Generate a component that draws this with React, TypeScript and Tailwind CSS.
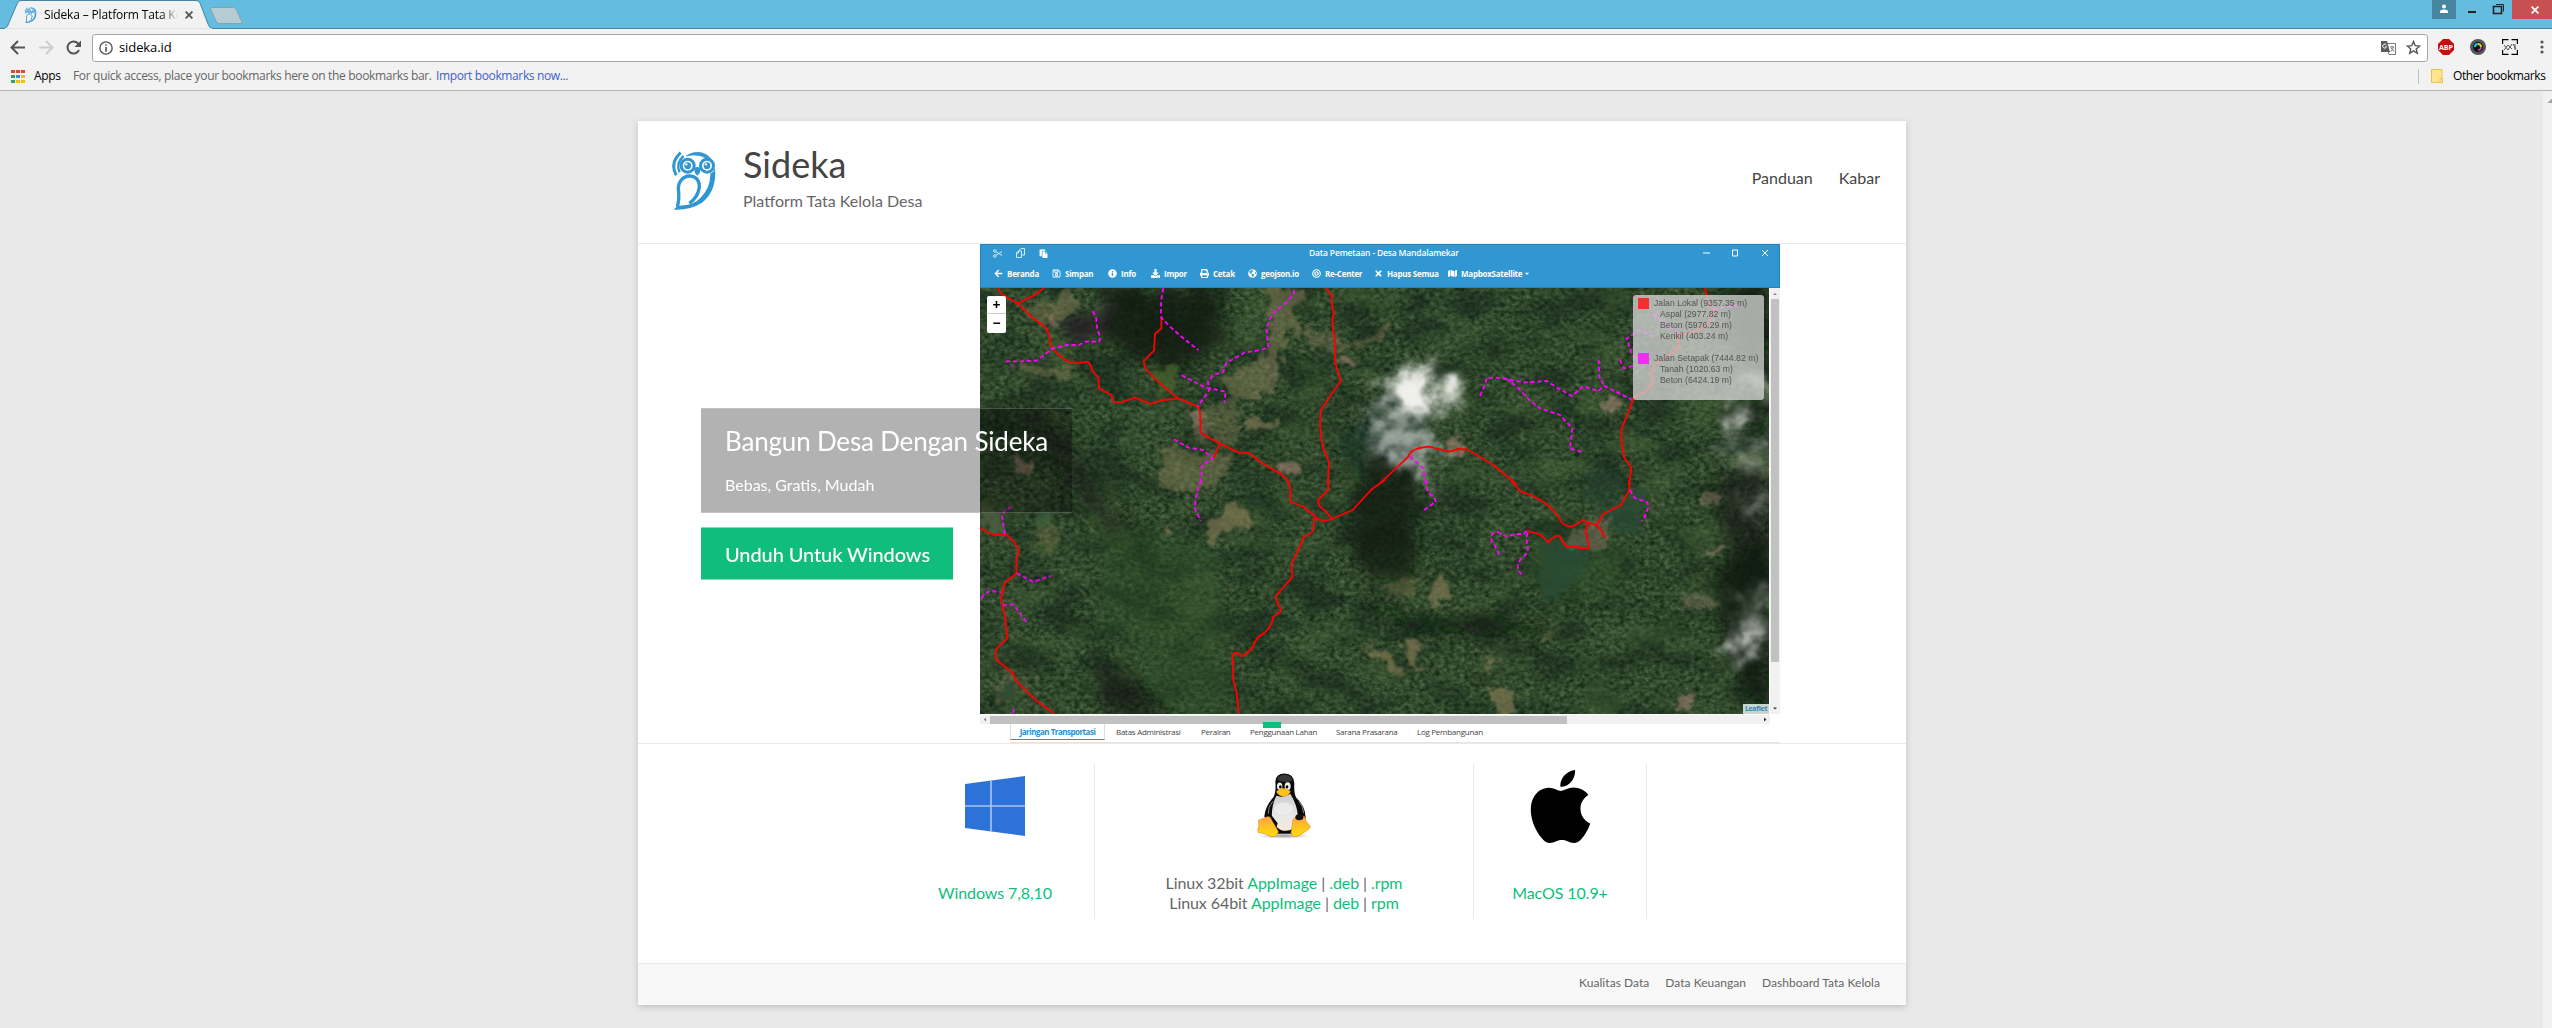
import React from "react";
import {
  FaArrowLeft, FaRegSave, FaInfoCircle, FaDownload, FaPrint, FaGlobeAmericas, FaBullseye,
  FaTimes, FaMap, FaRegCopy, FaPaste, FaCaretDown,
} from "react-icons/fa";
import { SiApple } from "react-icons/si";

const UI = "font-['Open_Sans','Noto_Sans',sans-serif]";

function Owl({ className }: { className: string }) {
  return (
    <svg viewBox="120 120 141 180" className={className} fill="none" stroke="#3096d3">
      <path d="M152 128Q118 160 139 196" strokeWidth="9" />
      <path d="M161 138Q136 160 149 187" strokeWidth="7" />
      <path d="M168 138Q196 120 223 131Q242 139 249 160Q215 126 168 138Z" fill="#3096d3" strokeWidth="2" />
      <circle cx="173" cy="167" r="19.500" strokeWidth="9" />
      <circle cx="231" cy="167" r="19.500" strokeWidth="9" />
      <circle cx="173" cy="167" r="10" fill="#3096d3" stroke="none" />
      <circle cx="231" cy="167" r="10" fill="#3096d3" stroke="none" />
      <circle cx="169" cy="163" r="3.500" fill="#fff" stroke="none" />
      <circle cx="228" cy="163" r="3.500" fill="#fff" stroke="none" />
      <path d="M193 174Q202 168 211 174Q212 190 202 197Q192 190 193 174Z" fill="#3096d3" stroke="none" />
      <path d="M142 290Q149 268 145 236C146 188 210 184 208 232Q204 262 178 280" strokeWidth="10" />
      <path d="M241 190Q256 186 254 166Q264 240 216 278Q180 301 131 299Q138 292 142 287Q190 289 213 262Q242 232 241 190Z" fill="#3096d3" stroke="none" />
    </svg>
  );
}

function BrowserTabs() {
  return (
    <div className={`relative flex h-[29px] border-b border-[#4585a2] bg-[#64bddf] ${UI}`}>
      <svg className="absolute left-0 top-0 h-[29px] w-[250px]" viewBox="0 0 250 29">
        <path d="M0 28.500H4Q7 28 8 25L17 4Q18 .5 21 .5H196Q199 .5 200 3L208 24Q209.500 28.500 213 28.500H250" fill="#f2f2f2" stroke="#4585a2" />
        <path d="M5 29H212" stroke="#f2f2f2" strokeWidth="1.500" />
        <path d="M212 7.500H233Q235 7.500 236 9L242 22Q242.500 23.500 241 23.500H219Q217 23.500 216 21L210.500 9Q210 7.500 212 7.500Z" fill="#b7cbd3" stroke="#7fa5b5" />
      </svg>
      <div className="relative flex h-[29px] items-center pl-[24px]">
        <Owl className="h-4 w-[13px]" />
        <span className="ml-[7px] w-[134px] whitespace-nowrap bg-gradient-to-r from-black from-85% to-[#f2f2f2] bg-clip-text text-[12px] tracking-[-0.15px] text-transparent">
          Sideka – Platform Tata Ke
        </span>
        <svg className="ml-[7px] h-2 w-2" viewBox="0 0 7 7"><path d="M.5 .5L6.500 6.500M6.500 .5L.5 6.500" stroke="#555" strokeWidth="1.600" /></svg>
      </div>
      <div className="relative ml-auto flex h-[19px]">
        <div className="flex w-6 items-center justify-center bg-[#46849f]">
          <svg viewBox="0 0 10 10" className="mb-[2px] h-[10px] w-[10px]"><circle cx="5" cy="2.500" r="2" fill="#fff" /><path d="M1 9V7.500Q1 5.500 5 5.500T9 7.500V9Z" fill="#fff" /></svg>
        </div>
        <svg className="h-[19px] w-14" viewBox="0 0 56 19" fill="none" stroke="#222">
          <path d="M12 12H20" strokeWidth="2" />
          <path d="M37.500 6.500H45.500V13.500H37.500Z" strokeWidth="1.600" /><path d="M40 4.500H47.500V11.500" />
        </svg>
        <div className="flex w-10 items-center bg-[#c75050] pl-[19px]">
          <svg viewBox="0 0 8 8" className="h-2 w-2"><path d="M.6 .6L7.400 7.400M7.400 .6L.6 7.400" stroke="#fff" strokeWidth="1.700" /></svg>
        </div>
      </div>
    </div>
  );
}

function AddressRow() {
  return (
    <div className="flex h-9 items-center">
      <svg className="h-9 w-[92px] shrink-0" viewBox="0 0 92 36" fill="none" stroke="#555" strokeWidth="2">
        <path d="M25 18.500H12.500M18 12L11.500 18.500L18 25" />
        <path d="M39 18.500H52M46 12L52.500 18.500L46 25" stroke="#ccc" />
        <path d="M79 21A6 6 0 1 1 78 14.500L80 16.500" /><path d="M81 11.500V18H74.500Z" fill="#555" stroke="none" />
      </svg>
      <div className="mt-[1px] flex h-[28px] flex-1 items-center rounded-[3px] border border-[#a6a6a6] bg-white pl-[6px] pr-[6px]">
        <svg className="h-[14px] w-[14px]" viewBox="0 0 13 13" fill="none" stroke="#555"><circle cx="6.500" cy="6.500" r="5.700" strokeWidth="1.300" /><path d="M6.500 5.500V10M6.500 3V4.500" strokeWidth="1.500" /></svg>
        <span className="ml-[6px] text-[13px] tracking-[-0.1px] text-black">sideka.id</span>
        <svg className="ml-auto h-[14px] w-[15px]" viewBox="0 0 15 14"><path d="M5.500 2.500H14.500V13.500H8Z" fill="#fff" stroke="#777" /><path d="M0 0H6L9 11H0Z" fill="#5c5c5c" /><path d="M5.500 4.200A2 2 0 1 0 5.500 6H4" fill="none" stroke="#fff" /><path d="M9 6H13M11 5V6M12.500 6Q12 9 9.500 10.500M10 7L13 10.500" stroke="#777" fill="none" /></svg>
        <svg className="ml-[10px] h-[15px] w-[15px]" viewBox="0 0 15 15"><path d="M7.500 1.500L9.200 5.700L13.700 6L10.200 8.900L11.300 13.300L7.500 10.900L3.700 13.300L4.800 8.900L1.300 6L5.800 5.700Z" fill="none" stroke="#555" strokeWidth="1.400" /></svg>
      </div>
      <div className="flex w-[124px] shrink-0 items-center">
        <svg className="ml-[10px] h-4 w-4" viewBox="0 0 16 16"><path d="M5 0H11L16 5V11L11 16H5L0 11V5Z" fill="#c70d0d" /><text x="8" y="10.600" textAnchor="middle" fontSize="7" fontWeight="bold" fill="#fff" fontFamily="Open Sans" textLength="14" lengthAdjust="spacingAndGlyphs">ABP</text></svg>
        <svg className="ml-[16px] h-4 w-4" viewBox="0 0 16 16"><circle cx="8" cy="8" r="8" fill="#51565c" /><circle cx="8" cy="8" r="5" fill="#111" /><path d="M5 8A3 3 0 0 1 8 5" stroke="#1bd0c0" strokeWidth="2" fill="none" /><path d="M8 5A3 3 0 0 1 11 8" stroke="#d8d020" strokeWidth="2" fill="none" /><path d="M11 8A3 3 0 0 1 8 11" stroke="#e040c0" strokeWidth="1.500" fill="none" /></svg>
        <svg className="ml-[16px] h-4 w-4" viewBox="0 0 16 16" fill="none" stroke="#000"><path d="M.5 5V.5H6.500M9.500 .5H15.500V5M15.500 11V15.500H9.500M6.500 15.500H.5V11" strokeWidth="1.400" /><path d="M2 6L6 11M6 6L2 11M6 6L10 10M10 5L6 11M11 5L14 10M13 5V11" stroke="#555" /></svg>
        <svg className="ml-[22px] h-[14px] w-[4px]" viewBox="0 0 4 14" fill="#555"><circle cx="2" cy="2" r="1.600" /><circle cx="2" cy="7" r="1.600" /><circle cx="2" cy="12" r="1.600" /></svg>
      </div>
    </div>
  );
}

const appDots = ["#ea4335", "#ea4335", "#ea4335", "#34a05a", "#3b88f0", "#fbbc05", "#34a05a", "#fbbc05", "#fbbc05"];

function BookmarksBar() {
  return (
    <div className="flex h-[26px] items-center border-b border-[#b3b3b3] pb-[3px] pl-[11px] text-[12px] leading-none">
      <div className="grid grid-cols-[4px_4px_4px] gap-x-[1px] gap-y-[2px] pt-[1px]">
        {appDots.map((c, i) => <i key={i} className="block h-[3px] w-[4px]" style={{ background: c }} />)}
      </div>
      <span className="ml-[9px] w-[39px] whitespace-nowrap tracking-[-0.3px] text-black">Apps</span>
      <span className="w-[363px] whitespace-nowrap tracking-[-0.33px] text-[#666]">For quick access, place your bookmarks here on the bookmarks bar.</span>
      <span className="whitespace-nowrap tracking-[-0.37px] text-[#3d5fd0]">Import bookmarks now...</span>
      <div className="ml-auto flex items-center">
        <i className="mr-3 block h-[15px] w-px bg-[#c0c0c0]" />
        <svg className="h-[14px] w-3" viewBox="0 0 12 14"><path d="M.5 .5H11V9.500L11.500 13.500H.5Z" fill="#ffe58f" stroke="#e8c34c" /><path d="M9 9.500H11.500V13.500H9Z" fill="#ffe58f" stroke="#e8c34c" /></svg>
        <span className="ml-[10px] mr-[6px] w-[93px] whitespace-nowrap tracking-[-0.4px] text-black">Other bookmarks</span>
      </div>
    </div>
  );
}

const tools = [
  { icon: FaArrowLeft, label: "Beranda", w: "w-[58px]" },
  { icon: FaRegSave, label: "Simpan", w: "w-[56px]" },
  { icon: FaInfoCircle, label: "Info", w: "w-[43px]" },
  { icon: FaDownload, label: "Impor", w: "w-[49px]" },
  { icon: FaPrint, label: "Cetak", w: "w-[48px]" },
  { icon: FaGlobeAmericas, label: "geojson.io", w: "w-[64px]" },
  { icon: FaBullseye, label: "Re-Center", w: "w-[62px]" },
  { icon: FaTimes, label: "Hapus Semua", w: "w-[74px]" },
  { icon: FaMap, label: "MapboxSatellite", w: "w-[80px]" },
];

function Satellite() {
  return (
    <svg className="block h-[426px] w-[789px]" viewBox="0 0 789 426">
      <defs>
        <filter id="forest" x="0" y="0" width="100%" height="100%" colorInterpolationFilters="sRGB">
          <feTurbulence type="fractalNoise" baseFrequency="0.2 0.26" numOctaves="3" seed="8" />
          <feColorMatrix values=".3 .12 0 0 -.015  .32 .13 0 0 .06  .27 .12 0 0 -.02  0 0 0 0 1" />
        </filter>
        <filter id="relief" x="0" y="0" width="100%" height="100%" colorInterpolationFilters="sRGB">
          <feTurbulence type="fractalNoise" baseFrequency="0.02 0.034" numOctaves="6" seed="21" />
          <feColorMatrix values="0 0 0 0 .06  0 0 0 0 .13  0 0 0 0 .09  3.500 0 0 0 -1.500" />
        </filter>
        <filter id="meadow" x="0" y="0" width="100%" height="100%" colorInterpolationFilters="sRGB">
          <feTurbulence type="fractalNoise" baseFrequency="0.02 0.03" numOctaves="6" seed="35" />
          <feColorMatrix values="0 0 0 0 .32  0 0 0 0 .43  0 0 0 0 .24  0 3 0 0 -1.500" />
        </filter>
        <filter id="ragged" x="-30%" y="-30%" width="160%" height="160%">
          <feTurbulence type="fractalNoise" baseFrequency="0.07" numOctaves="4" seed="4" />
          <feDisplacementMap in="SourceGraphic" scale="24" xChannelSelector="R" yChannelSelector="G" />
          <feGaussianBlur stdDeviation="1" />
        </filter>
        <filter id="haze" x="-30%" y="-30%" width="160%" height="160%">
          <feTurbulence type="fractalNoise" baseFrequency="0.05" numOctaves="4" seed="9" />
          <feDisplacementMap in="SourceGraphic" scale="34" xChannelSelector="R" yChannelSelector="G" />
          <feGaussianBlur stdDeviation="6" />
        </filter>
        <filter id="cloud" x="-30%" y="-30%" width="160%" height="160%" colorInterpolationFilters="sRGB">
          <feTurbulence type="fractalNoise" baseFrequency="0.045" numOctaves="5" seed="12" result="n" />
          <feGaussianBlur in="SourceGraphic" stdDeviation="7" result="b" />
          <feDisplacementMap in="b" in2="n" scale="40" xChannelSelector="R" yChannelSelector="G" result="d" />
          <feColorMatrix in="n" values="0 0 0 0 1  0 0 0 0 1  0 0 0 0 1  0 0 2 0 -.15" result="m" />
          <feComposite in="d" in2="m" operator="in" />
          <feGaussianBlur stdDeviation="1.200" />
        </filter>
      </defs>
      <rect width="789" height="426" fill="#2f452b" />
      <rect width="789" height="426" filter="url(#forest)" />
      <rect width="789" height="426" filter="url(#relief)" opacity=".5" />
      <rect width="789" height="426" filter="url(#meadow)" opacity=".4" />
      <g filter="url(#haze)" fill="#0d1712">
        <path d="M120 0H238L240 55L190 85L130 50Z" opacity=".8" />
        <path d="M85 22H130V55H85Z" fill="#252127" opacity=".85" />
        <path d="M395 165L440 180L435 215L425 300L395 290L360 250L372 220Z" opacity=".75" />
        <path d="M410 100L450 130L430 200L385 190L350 160Z" opacity=".4" />
        <path d="M735 0H789V90L760 70Z" opacity=".85" />
        <path d="M735 130L789 100V145Z" opacity=".7" />
        <path d="M750 270L789 240V426L760 400L738 310Z" opacity=".85" />
        <path d="M735 190L789 175V250L750 265Z" opacity=".6" />
        <path d="M60 110L90 160L125 210L190 290L130 250L80 180L40 140Z" opacity=".5" />
        <path d="M380 310L440 330L520 330L580 345L520 345L430 340Z" opacity=".75" />
        <path d="M115 370L160 400L190 426H130Z" opacity=".6" />
      </g>
      <g filter="url(#haze)" fill="#2f5229" opacity=".4">
        <path d="M115 230L240 260L250 426H190L120 330Z" /><path d="M550 250L640 240L640 310L560 310Z" />
      </g>
      <g filter="url(#ragged)" fill="#857c57" opacity=".65">
        <path d="M285 0H325L315 25L300 60L295 105L262 110L240 90L285 70L290 35Z" opacity=".8" />
        <path d="M310 28L335 45L370 55L405 40L408 48L372 62L335 58L310 40Z" opacity=".6" />
        <path d="M78 5L102 8L98 22L75 35L70 22Z" opacity=".8" /><path d="M45 20L82 10L60 45Z" opacity=".6" />
        <path d="M35 75L80 78L95 88L60 90Z" opacity=".7" />
        <path d="M178 180L210 165L250 168L245 190L215 205L180 200Z" opacity=".7" />
        <path d="M255 105L262 140L250 160L230 150L222 128Z" opacity=".5" />
        <path d="M268 130L298 132L290 142L268 140Z" />
        <path d="M252 212L275 238L242 242L235 262L222 250Z" />
        <path d="M460 282L474 310L450 320Z" /><path d="M388 355L405 360L420 383L412 385Z" />
        <path d="M424 353L443 355L440 372L446 385L425 370Z" /><path d="M510 400L537 405L532 426H516Z" />
        <path d="M503 384L524 360L520 368L505 390Z" /><path d="M560 345L575 340L560 360Z" opacity=".6" />
        <path d="M182 160L205 162L198 188L182 182Z" opacity=".7" /><path d="M190 235L183 250L195 240Z" />
        <path d="M0 215L22 220L22 245L5 245Z" fill="#55664a" /><path d="M60 230L80 235L75 260L55 260Z" opacity=".5" />
        <path d="M10 395L35 380L45 400L20 420Z" opacity=".5" /><path d="M395 300L440 290L430 312Z" opacity=".5" />
      </g>
      <g filter="url(#ragged)" fill="#2b4b35" opacity=".75">
        <path d="M560 255L610 250L605 285L580 315L560 310Z" /><path d="M620 225L665 200L660 245L640 250Z" />
        <path d="M60 215L80 240L55 235Z" fill="#3b5e3a" /><path d="M10 400L38 395L30 412Z" />
        <path d="M170 90L190 75L198 95L180 110Z" fill="#49632f" /><path d="M600 180L640 185L640 240L605 220Z" opacity=".6" />
      </g>
      <g filter="url(#ragged)" fill="#b58b7e" opacity=".5">
        <path d="M205 125L222 120L228 132L210 140Z" /><path d="M210 135L240 135L220 150Z" opacity=".6" />
        <path d="M298 175L322 178L320 188L300 185Z" /><path d="M350 75L375 70L370 80Z" />
        <path d="M462 152L485 148L483 165L466 170Z" /><path d="M625 106L645 115L640 125L625 120Z" />
        <path d="M30 170L50 172L55 185L40 185Z" /><path d="M60 25L78 28L70 38Z" />
        <path d="M600 236L630 230L625 262L590 260Z" opacity=".6" /><path d="M730 258L748 258L745 264L730 264Z" />
        <path d="M720 205L740 208L735 216L718 214Z" opacity=".7" /><path d="M700 310L738 308L742 318L715 320Z" opacity=".5" />
        <path d="M700 408L720 404L712 414L695 418Z" />
      </g>
      <g filter="url(#cloud)" fill="#efefeb">
        <path d="M412 80L452 80L478 92L468 122L430 130L402 116Z" />
        <path d="M385 125L430 130L460 155L445 195L410 178L388 150Z" opacity=".6" />
        <path d="M748 120L764 118L764 146L750 146Z" opacity=".8" /><path d="M735 160L789 150V190L765 180Z" opacity=".4" />
        <path d="M762 84L789 80V106L757 102Z" opacity=".5" />
        <path d="M768 334L784 328L780 350L757 376L746 368Z" opacity=".9" /><path d="M750 205L788 210L782 232Z" opacity=".4" />
        <path d="M750 310L789 295V330L760 335Z" opacity=".3" />
      </g>
      <g fill="none" strokeLinejoin="round" strokeWidth="5.500" stroke="#f00">
        <g transform="translate(-10 -53) scale(.33333)">
          <path d="M85 160Q90 178 105 183L142 205L190 250L222 273Q240 290 240 325Q245 342 270 362Q300 388 320 385L352 380Q362 385 365 405L385 428L387 460L425 480L430 500Q450 505 465 498L495 488L542 507L580 495L626 491L685 515Q692 525 692 590Q697 600 750 625L810 655L835 653L880 687L930 715Q955 735 958 750M142 205L190 182L222 160M574 247L574 280L555 297L552 347L522 377Q520 390 530 405Q560 440 626 491M750 625L730 670M1068 160L1086 182Q1082 200 1092 235Q1082 255 1094 310L1096 385L1112 437L1053 525Q1045 610 1068 660L1077 680L1074 750" />
          <g stroke="#f0f" strokeDasharray="13 8">
            <path d="M108 379H148L200 377L245 342L290 330L327 330L345 320L387 320Q395 310 382 285L378 245L365 225M580 160Q570 200 574 247Q585 260 600 275L640 310L685 345M972 165Q975 180 945 205L908 237Q890 270 890 290L895 335Q885 345 825 352L768 385L760 410L730 420L714 440L718 465L683 515M635 421L705 457L767 470L763 503M612 613L655 638L700 645L728 670L697 690L692 750" />
          </g>
        </g>
        <g transform="translate(400 -53) scale(.33333)">
          <path d="M975 160L985 195L1000 230L985 265Q950 295 895 298L895 342L830 385L812 410L818 440Q805 475 780 475L760 490L748 525L725 580Q722 610 732 665L754 700L747 750M0 745L85 665Q90 640 147 635L208 650L235 642L262 643L340 690L410 748" />
          <g stroke="#f0f" strokeDasharray="13 8">
            <path d="M300 483Q315 450 320 430Q350 425 378 432L435 442L500 438L535 460L575 483L610 454L655 468L672 452L757 495M378 432Q400 445 420 465Q450 500 480 520L540 540L577 580L570 640L608 652M656 375L658 425L672 452M720 375L732 400L760 393M820 305L780 285L740 310L757 360L775 375M1075 210L1000 222M895 295L815 235M90 665L130 700L138 750" />
          </g>
        </g>
        <g transform="translate(-300 102) scale(.33333)">
          <path d="M900 415L940 434H975Q1000 445 1017 482Q1005 510 1010 550L975 577L963 625L975 680L982 745L950 775Q943 800 952 812L1000 850L1006 870L1070 933L1122 970" />
          <g stroke="#f0f" strokeDasharray="13 8">
            <path d="M995 350L975 360L966 378L975 435M1010 550L1060 575L1112 558M903 625Q925 600 935 602L963 607M968 645L1000 643L1040 697M1000 970V955" />
          </g>
        </g>
        <g transform="translate(190 192) scale(.33333)">
          <path d="M352 0L362 30Q358 50 362 66L400 80L434 107L430 150Q425 162 402 170Q390 200 368 245Q362 260 368 290L320 345Q314 360 333 388Q330 400 310 410Q305 430 300 440Q280 465 268 468Q252 485 250 500L225 525L215 528Q195 510 188 525L190 600L200 640L206 700M475 0V28L445 60Q440 75 465 92L485 115M434 110Q460 130 485 117L548 90L605 28L645 0M1022 0L1052 35Q1140 60 1175 128Q1195 145 1212 137L1238 121L1255 129M1072 153L1110 163L1136 187Q1152 165 1167 167L1188 198L1255 205" />
          <g stroke="#f0f" strokeDasharray="13 8">
            <path d="M93 0Q75 50 75 85L92 123M768 0L773 38Q795 50 797 65L760 92M988 224L962 175Q965 155 985 157L1010 170L1035 162H1060L1072 152L1070 190Q1082 215 1055 235Q1030 260 1058 287" />
          </g>
        </g>
        <g transform="translate(580 192) scale(.33333)">
          <path d="M208 0V30L183 75L130 102Q120 120 110 137Q125 150 130 165L137 173M110 137L85 128Q72 145 82 180Q90 195 85 205L18 200L0 170" />
          <path d="M210 30L223 53L262 67Q270 90 245 123" stroke="#f0f" strokeDasharray="13 8" />
        </g>
      </g>
    </svg>
  );
}

const legend = [
  { color: "#f23030", title: "Jalan Lokal (9357.35 m)", rows: ["Aspal (2977.82 m)", "Beton (5976.29 m)", "Kerikil (403.24 m)"] },
  { color: "#ee30ee", title: "Jalan Setapak (7444.82 m)", rows: ["Tanah (1020.63 m)", "Beton (6424.19 m)"] },
];

function MapApp() {
  return (
    <div className={`flex h-[499px] w-[800px] flex-col ${UI}`}>
      <div className="h-11 border border-[#2384bd] bg-[#3097d2] text-white">
        <div className="relative flex h-4 items-center pl-3 text-[9px]">
          <svg className="h-[9px] w-[9px]" viewBox="0 0 9 9" fill="none" stroke="#d5eaf6"><circle cx="1.800" cy="2" r="1.300" /><circle cx="1.800" cy="7" r="1.300" /><path d="M3 2.800L9 6.500M3 6.200L9 2.500" /></svg>
          <svg className="ml-[14px] h-[10px] w-[9px]" viewBox="0 0 9 10" fill="none" stroke="#d5eaf6"><path d="M3.500 3V2L5 .5H8.500V7H5.500M.5 5L2.500 3H5.500V9.500H.5ZM2.500 3V5H.5" /></svg>
          <FaPaste className="ml-[14px]" />
          <span className="absolute left-[328px] whitespace-nowrap text-[8.500px] font-semibold tracking-[-0.16px]">Data Pemetaan - Desa Mandalamekar</span>
          <svg className="ml-auto mr-[10px] h-2 w-[66px]" viewBox="0 0 66 8" fill="none" stroke="#fff"><path d="M0 4H7M29.500 1H34.500V7H29.500ZM59 1L65 7M65 1L59 7" /></svg>
        </div>
        <div className="flex h-[25px] items-center pl-[13px] text-[8px] font-bold">
          {tools.map(({ icon: Icon, label, w }) => (
            <span key={label} className={`flex shrink-0 items-center gap-1 whitespace-nowrap tracking-[-0.25px] ${w}`}>
              <Icon className="h-[9px] w-[9px] shrink-0" />{label}
              {label === "MapboxSatellite" && <FaCaretDown className="-ml-[2px] h-[7px] w-[6px] shrink-0" />}
            </span>
          ))}
        </div>
      </div>
      <div className="flex h-[426px]">
        <div className="relative w-[790px] border-r border-white">
          <Satellite />
          <div className="absolute left-[7px] top-2 flex h-[37px] w-[19px] flex-col rounded-[2px] bg-white text-center text-[14px] font-bold leading-[17px] text-black">
            <span className="h-[18px] border-b border-[#ccc]">+</span><span>−</span>
          </div>
          <div className="absolute left-[653px] top-[7px] h-[105px] w-[131px] rounded-[3px] bg-[#dadada]/75 pl-[5px] pt-[3px] font-['Liberation_Sans',Arial,sans-serif] text-[8.700px] leading-[11px] text-[#555]">
            {legend.map((g) => (
              <div key={g.title} className="mb-[11px]">
                <div className="flex whitespace-nowrap"><i className="mr-[5px] block h-[11px] w-[11px]" style={{ background: g.color }} />{g.title}</div>
                {g.rows.map((r) => <div key={r} className="whitespace-nowrap pl-[22px]">{r}</div>)}
              </div>
            ))}
          </div>
          <div className="absolute bottom-0 right-0 h-[10px] w-[26px] bg-[#cdd3ce] text-center text-[7px] font-bold leading-[10px] tracking-[-0.3px] text-[#2b8cb3]">Leaflet</div>
        </div>
        <div className="flex w-[10px] flex-col items-center bg-[#f1f1f1]">
          <svg className="h-[11px] w-[6px]" viewBox="0 0 6 11"><path d="M1 7L3 5L5 7Z" fill="#888" /></svg>
          <div className="h-[363px] w-2 bg-[#c1c1c1]" />
          <svg className="mt-auto h-[11px] w-[6px]" viewBox="0 0 6 11"><path d="M1 4.500H5L3 6.500Z" fill="#333" /></svg>
        </div>
      </div>
      <div className="mt-px flex h-[9px] w-[790px] items-center bg-[#f1f1f1]">
        <svg className="h-[9px] w-[10px]" viewBox="0 0 10 9"><path d="M6 2.500V6.500L4 4.500Z" fill="#777" /></svg>
        <div className="h-2 w-[577px] bg-[#c1c1c1]" />
        <svg className="ml-auto h-[9px] w-[8px]" viewBox="0 0 8 9"><path d="M2 2.500V6.500L4.500 4.500Z" fill="#333" /></svg>
      </div>
      <div className="ml-[30px] flex h-[19px] border-b border-[#e4e4e4] text-[8px] leading-[16px] tracking-[-0.27px] text-[#444]">
        <span className="h-4 w-[95px] whitespace-nowrap border-x border-b border-x-[#ddd] border-b-[#2a8fcc] text-center text-[8px] font-bold tracking-[-0.5px] text-[#2a8fcc]">Jaringan Transportasi</span>
        <span className="ml-[11px] w-[85px] whitespace-nowrap">Batas Administrasi</span>
        <span className="w-[49px] whitespace-nowrap">Perairan</span>
        <span className="w-[86px] whitespace-nowrap">Penggunaan Lahan</span>
        <span className="w-[81px] whitespace-nowrap">Sarana Prasarana</span>
        <span className="whitespace-nowrap">Log Pembangunan</span>
      </div>
    </div>
  );
}

function Tux() {
  return (
    <svg viewBox="0 0 162 200" className="h-[67px] w-[54px]">
      <defs>
        <linearGradient id="foot" x2="0" y2="1"><stop stopColor="#ffa049" /><stop offset="1" stopColor="#ffe000" /></linearGradient>
        <linearGradient id="belly" x2="0" y2="1"><stop stopColor="#ccc" /><stop offset=".6" stopColor="#e8e8e8" /><stop offset="1" stopColor="#f8e8d8" /></linearGradient>
        <radialGradient id="shade"><stop stopColor="#999" /><stop offset="1" stopColor="#fff" /></radialGradient>
      </defs>
      <ellipse cx="81" cy="188" rx="78" ry="9" fill="url(#shade)" />
      <path d="M55 25Q57 1 83 1Q110 2 112 30Q110 60 118 74Q146 100 146 135L138 150L110 182H58L22 130Q25 98 48 74Q58 60 55 25Z" fill="#0a0a0a" />
      <path d="M60 20Q66 5 84 5Q102 6 107 22Q84 32 60 20Z" fill="#555" opacity=".6" />
      <path d="M58 68Q78 75 100 62Q120 95 122 125L112 165Q80 182 60 162L44 130Q45 92 58 68Z" fill="url(#belly)" />
      <ellipse cx="80" cy="106" rx="29" ry="18" fill="#f3f3f3" opacity=".6" />
      <path d="M34 122Q32 100 48 84M126 84Q138 98 140 120" stroke="#888" strokeWidth="3" fill="none" />
      <ellipse cx="68" cy="39" rx="8" ry="11" fill="#eee" /><ellipse cx="92" cy="39" rx="9" ry="12" fill="#eee" />
      <ellipse cx="70" cy="41" rx="4" ry="5" /><ellipse cx="90" cy="41" rx="4" ry="5" />
      <path d="M58 56Q70 44 79 45Q90 46 101 55Q94 68 80 70Q64 68 58 56Z" fill="#ffc01d" stroke="#d98a00" />
      <path d="M24 134Q38 124 46 142L64 176Q60 192 42 190Q28 180 4 178Q0 168 6 158L4 142Q12 138 24 134Z" fill="url(#foot)" stroke="#e78d20" strokeWidth="2" />
      <path d="M108 140Q120 122 142 130Q146 145 160 160Q156 170 146 174Q128 190 112 190Q98 184 104 170Z" fill="url(#foot)" stroke="#e78d20" strokeWidth="2" />
      <ellipse cx="127" cy="132" rx="12" ry="9" fill="#111" />
      <path d="M40 122L62 150L58 162L44 140Z" fill="#0a0a0a" />
    </svg>
  );
}

const G = ({ children }: { children: React.ReactNode }) => <a className="text-[#0fbe7c]">{children}</a>;

export default function App() {
  return (
    <div className="flex h-[1028px] w-[2552px] flex-col overflow-hidden bg-[#e9e9e9] font-['Lato',sans-serif] text-[#666]">
      <div className={`bg-[#f2f2f2] ${UI}`}>
        <BrowserTabs />
        <AddressRow />
        <BookmarksBar />
      </div>
      <div className="flex flex-1">
        <div className="flex-1">
          <div className="ml-[638px] mt-[30px] flex h-[884px] w-[1268px] flex-col bg-white shadow-[0_2px_6px_rgba(100,100,100,0.3)]">
            <header className="flex h-[123px] shrink-0 border-b border-[#e9e9e9] pl-8 pr-[26px]">
              <Owl className="mt-[29px] h-[60px] w-[47px]" />
              <div className="ml-[26px] mt-[21px]">
                <h1 className="text-[36px] leading-[44px] text-[#444]">Sideka</h1>
                <p className="mt-[5px] text-[16px] leading-[20px]">Platform Tata Kelola Desa</p>
              </div>
              <nav className="ml-auto mt-[47px] flex gap-[26px] text-[16px] leading-5 text-[#444]"><a>Panduan</a><a>Kabar</a></nav>
            </header>
            <section className="relative h-[500px] shrink-0 border-b border-[#e9e9e9] pl-[342px]">
              <MapApp />
              <div className="absolute left-[63px] top-[164px] flex flex-col items-start text-white">
                <div className="h-[105px] w-[371px] border-y border-white/20 bg-black/30 pl-6 pt-4">
                  <h2 className="whitespace-nowrap text-[26px] leading-8 tracking-[-0.18px]">Bangun Desa Dengan Sideka</h2>
                  <p className="mt-[18px] text-[16px] leading-5">Bebas, Gratis, Mudah</p>
                </div>
                <a className="mt-[14px] flex h-[53px] w-[252px] items-center whitespace-nowrap border-y border-[#7fdcb6] bg-[#0fbe7c] pl-6 text-[20px] font-medium tracking-[-0.1px]">Unduh Untuk Windows</a>
              </div>
              <i className="absolute left-[625px] top-[478px] block h-[6px] w-[18px] bg-[#0fbe7c]" />
            </section>
            <section className="ml-[258px] mt-5 flex h-[155px] text-center text-[16px] leading-5 tracking-[-0.08px]">
              <div className="flex w-[199px] flex-col items-center border-r border-[#e9e9e9] pt-3">
                <svg className="h-[60px] w-[60px]" viewBox="0 0 180 180"><path d="M0 24L180 0V180L0 156Z" fill="#2d72d9" /><path d="M78 13V167M0 90H180" stroke="#a9c4ef" strokeWidth="5" /></svg>
                <p className="mt-[47px]"><G>Windows 7,8,10</G></p>
              </div>
              <div className="flex w-[379px] flex-col items-center border-r border-[#e9e9e9] pt-[9px]">
                <Tux />
                <p className="mt-[33px]">Linux 32bit <G>AppImage</G> | <G>.deb</G> | <G>.rpm</G><br />Linux 64bit <G>AppImage</G> | <G>deb</G> | <G>rpm</G></p>
              </div>
              <div className="flex w-[173px] flex-col items-center border-r border-[#e9e9e9] pt-[6px]">
                <SiApple className="h-[73px] w-[73px] text-black" />
                <p className="mt-[40px]"><G>MacOS 10.9+</G></p>
              </div>
            </section>
            <footer className="mt-auto flex h-[42px] items-center justify-end gap-4 border-t border-[#e9e9e9] bg-[#f8f8f8] pb-1 pr-[26px] text-[12px] tracking-[0.04px]">
              <a>Kualitas Data</a><a>Data Keuangan</a><a>Dashboard Tata Kelola</a>
            </footer>
          </div>
        </div>
        <div className="w-[9px] bg-[#f1f1f1]"><svg className="mt-[7px] h-[5px] w-[9px]" viewBox="0 0 9 5"><path d="M4.500 5L9 .5V5Z" fill="#a3a3a3" /></svg></div>
      </div>
    </div>
  );
}
